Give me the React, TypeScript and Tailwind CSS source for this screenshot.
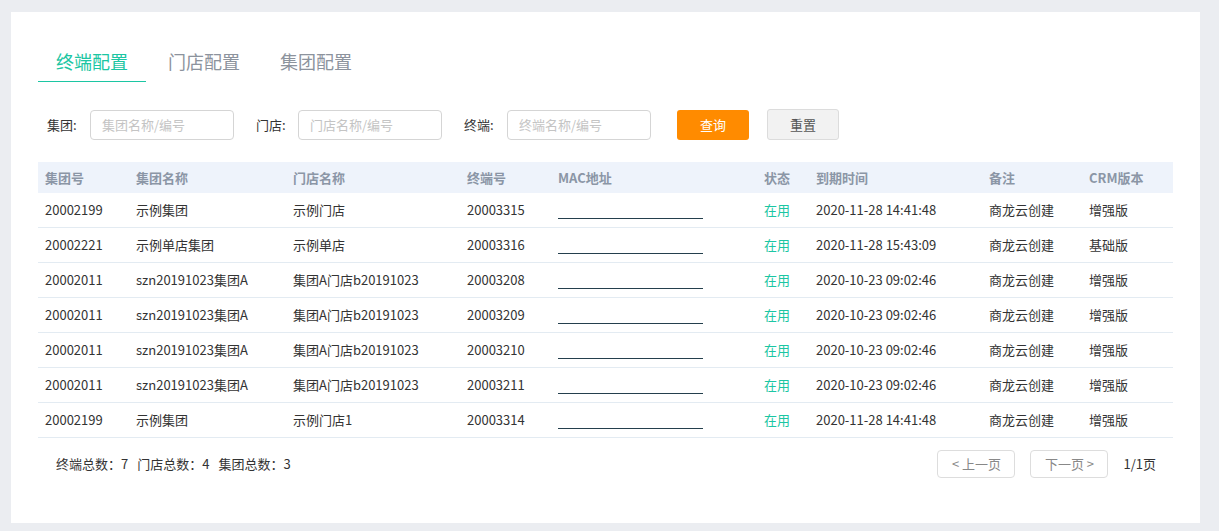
import React from 'react'

const font = { fontFamily: '"Microsoft YaHei", "Noto Sans CJK SC", "Noto Sans", sans-serif' }

const cols = [
  { key: 'gid', label: '集团号', w: 'w-[91px]' },
  { key: 'gname', label: '集团名称', w: 'w-[157px]' },
  { key: 'sname', label: '门店名称', w: 'w-[174px]' },
  { key: 'tid', label: '终端号', w: 'w-[91px]' },
  { key: 'mac', label: 'MAC地址', w: 'w-[206px]' },
  { key: 'status', label: '状态', w: 'w-[52px]' },
  { key: 'expire', label: '到期时间', w: 'w-[173px]' },
  { key: 'note', label: '备注', w: 'w-[100px]' },
  { key: 'crm', label: 'CRM版本', w: 'flex-1' },
]

const rows = [
  ['20002199', '示例集团', '示例门店', '20003315', '2020-11-28 14:41:48', '增强版'],
  ['20002221', '示例单店集团', '示例单店', '20003316', '2020-11-28 15:43:09', '基础版'],
  ['20002011', 'szn20191023集团A', '集团A门店b20191023', '20003208', '2020-10-23 09:02:46', '增强版'],
  ['20002011', 'szn20191023集团A', '集团A门店b20191023', '20003209', '2020-10-23 09:02:46', '增强版'],
  ['20002011', 'szn20191023集团A', '集团A门店b20191023', '20003210', '2020-10-23 09:02:46', '增强版'],
  ['20002011', 'szn20191023集团A', '集团A门店b20191023', '20003211', '2020-10-23 09:02:46', '增强版'],
  ['20002199', '示例集团', '示例门店1', '20003314', '2020-11-28 14:41:48', '增强版'],
]

const filters = [
  { label: '集团:', ph: '集团名称/编号', w: 'w-[43px]' },
  { label: '门店:', ph: '门店名称/编号', w: 'w-[42px]' },
  { label: '终端:', ph: '终端名称/编号', w: 'w-[43px]' },
]

export default function App() {
  return (
    <div className="min-h-[531px] bg-[#ebedf1] pt-[12px] pl-[11px] pr-[19px] pb-[8px]" style={font}>
      <div className="bg-white w-[1189px] h-[511px] pl-[27px] pr-[27px] pt-[29px]">
        {/* tabs */}
        <div className="flex gap-[4px] text-[18px] leading-[40px]">
          <div className="px-[18px] text-[#1cc6a3] border-b border-[#1cc6a3]">终端配置</div>
          <div className="px-[18px] text-[#8c939d]">门店配置</div>
          <div className="px-[18px] text-[#8c939d]">集团配置</div>
        </div>

        {/* filters */}
        <div className="flex items-center mt-[27px] h-[31px] text-[13px] text-[#333]">
          {filters.map((f, i) => (
            <div key={i} className="flex items-center mr-[13px]">
              <span className={`ml-[9px] ${f.w}`}>{f.label}</span>
              <input
                placeholder={f.ph}
                className="w-[144px] h-[30px] border border-[#d5d5d5] rounded-[4px] px-[11px] text-[13px] outline-none placeholder:text-[#c4c4c4]"
              />
            </div>
          ))}
          <button className="ml-[13px] w-[72px] h-[30px] rounded-[3px] bg-[#ff8b00] text-white text-[13px]">查询</button>
          <button className="ml-[18px] w-[72px] h-[31px] rounded-[3px] bg-[#f2f2f2] border border-[#dcdcdc] text-[#555] text-[13px]">重置</button>
        </div>

        {/* table */}
        <div className="mt-[22px] w-[1135px] text-[13px]">
          <div className="flex h-[31px] items-center bg-[#eef3fb] font-bold text-[#8b96a6]">
            {cols.map((c) => (
              <div key={c.key} className={`${c.w} pl-[7px]`}>{c.label}</div>
            ))}
          </div>
          {rows.map((r, i) => (
            <div key={i} className="flex h-[35px] items-center border-b border-[#e3ebf2] text-[#333]">
              <div className="w-[91px] pl-[7px]">{r[0]}</div>
              <div className="w-[157px] pl-[7px]">{r[1]}</div>
              <div className="w-[174px] pl-[7px]">{r[2]}</div>
              <div className="w-[91px] pl-[7px]">{r[3]}</div>
              <div className="w-[206px] pl-[7px] self-stretch flex items-end pb-[8px]">
                <div className="w-[145px] border-b border-[#243f4d]" />
              </div>
              <div className="w-[52px] pl-[7px] text-[#1cc6a3]">在用</div>
              <div className="w-[173px] pl-[7px]">{r[4]}</div>
              <div className="w-[100px] pl-[7px]">商龙云创建</div>
              <div className="flex-1 pl-[7px]">{r[5]}</div>
            </div>
          ))}
        </div>

        {/* footer */}
        <div className="flex items-center mt-[12px] h-[28px] w-[1135px] text-[13px] text-[#333]">
          <div className="pl-[18px] flex gap-[9px]">
            <span>终端总数：7</span>
            <span>门店总数：4</span>
            <span>集团总数：3</span>
          </div>
          <div className="ml-auto flex items-center pr-[17px]">
            <button className="w-[78px] h-[28px] border border-[#dddddd] rounded-[4px] text-[#888] text-[13px]">&lt; 上一页</button>
            <button className="ml-[15px] w-[78px] h-[28px] border border-[#dddddd] rounded-[4px] text-[#888] text-[13px]">下一页 &gt;</button>
            <span className="ml-[15px]">1/1页</span>
          </div>
        </div>
      </div>
    </div>
  )
}
